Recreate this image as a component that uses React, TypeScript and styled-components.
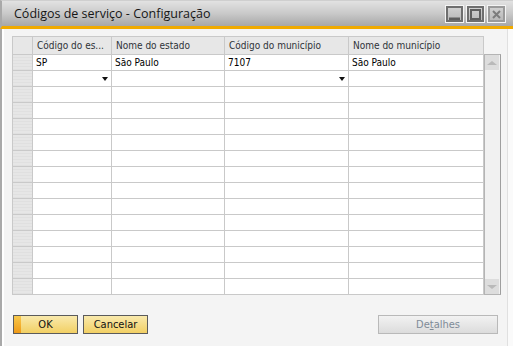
import { Fragment } from 'react';
import styled, { createGlobalStyle } from 'styled-components';

const GlobalStyle = createGlobalStyle`
  html, body {
    margin: 0;
    padding: 0;
    background: #fafafa;
  }
  * {
    box-sizing: border-box;
  }
`;

const cellFont = `'DejaVu Sans Condensed', 'Liberation Sans', sans-serif`;

const Window = styled.div`
  width: 513px;
  height: 346px;
  display: flex;
  flex-direction: column;
  overflow: hidden;
`;

const TitleBar = styled.header`
  height: 25px;
  display: flex;
  align-items: center;
  justify-content: space-between;
  padding: 0 7px 0 12px;
  border-top: 1px solid #cfcfcf;
  border-left: 2px solid #a9a9a9;
  background: linear-gradient(180deg, #e2e2e2 0%, #c9c9c9 50%, #a7a7a7 100%);
  border-bottom: 3px solid #f0aa00;
  box-sizing: content-box;
`;

const Title = styled.h1`
  margin: 0;
  margin-left: -10px;
  font-family: 'Open Sans', 'Liberation Sans', sans-serif;
  font-size: 12.5px;
  font-weight: 400;
  color: #161616;
  padding-left: 10px;
`;

const TitleButtons = styled.div`
  display: flex;
  gap: 2px;
  margin-top: 1px;
`;

const TitleButton = styled.div<{ $light?: boolean }>`
  width: 19px;
  height: 18px;
  border: 1px solid #f4f4f4;
  display: flex;
  align-items: center;
  justify-content: center;
  position: relative;
  &::before {
    content: '';
    position: absolute;
    inset: 0;
    border: 2px solid ${(p) => (p.$light ? '#9a9a9a' : '#6e6e6e')};
    background: linear-gradient(180deg, #d0d0d0, #b9b9b9);
  }
  svg {
    position: relative;
  }
`;

const Body = styled.main`
  flex: 1;
  display: flex;
  flex-direction: column;
  background: #f4f4f4;
  border-left: 2px solid #a9a9a9;
  border-right: 1px solid #e0e0e0;
  margin-right: 5px;
  padding: 7px 5px 0 10px;
  box-shadow: inset 2px 0 0 #ffffff;
`;

const GridArea = styled.div`
  display: flex;
  align-items: flex-start;
`;

const Grid = styled.div`
  display: grid;
  grid-template-columns: 19px 78px 112px 123px 134px;
  grid-template-rows: 17px repeat(15, 15px);
  gap: 1px;
  background: #c9c9c9;
  border: 1px solid #c9c9c9;
  font-family: ${cellFont};
  font-size: 10px;
`;

const HeaderCell = styled.div`
  background: #e7e7e7;
  color: #2e3338;
  padding: 0 4px;
  display: flex;
  align-items: center;
  white-space: nowrap;
  overflow: hidden;
`;

const RowHeader = styled.div`
  background: repeating-linear-gradient(
    180deg,
    #e6e6e6 0px,
    #e6e6e6 2px,
    #e0e0e0 2px,
    #e0e0e0 3px
  );
`;

const Cell = styled.div`
  background: #ffffff;
  color: #000000;
  padding: 0 3px;
  display: flex;
  align-items: center;
  justify-content: space-between;
  white-space: nowrap;
  overflow: hidden;
`;

const DropArrow = styled.span`
  margin-left: auto;
  width: 0;
  height: 0;
  border-left: 3.5px solid transparent;
  border-right: 3.5px solid transparent;
  border-top: 4px solid #111;
  margin-top: 1px;
`;

const Scrollbar = styled.div`
  width: 17px;
  height: 241px;
  margin-top: 18px;
  background: #f1f1f1;
  border: 1px solid #b4b4b4;
  border-right-color: #9e9e9e;
  display: flex;
  flex-direction: column;
  justify-content: space-between;
  padding: 0 1px 0 0;
`;

const ScrollButton = styled.div<{ $down?: boolean }>`
  width: 14px;
  height: 15px;
  background: #dddddd;
  display: flex;
  align-items: center;
  justify-content: center;
  &::after {
    content: '';
    width: 0;
    height: 0;
    border-left: 5px solid transparent;
    border-right: 5px solid transparent;
    ${(p) => (p.$down ? 'border-top' : 'border-bottom')}: 4px solid #b9b9b9;
  }
`;

const Footer = styled.footer`
  display: flex;
  align-items: center;
  justify-content: space-between;
  margin-top: 20px;
  padding: 0 4px 0 1px;
`;

const ButtonGroup = styled.div`
  display: flex;
  gap: 5px;
`;

const ActionButton = styled.button<{ $primary?: boolean }>`
  width: 65px;
  height: 19px;
  border: 1px solid #5b5b5b;
  padding: 0;
  margin: 0;
  font-family: ${cellFont};
  font-size: 11px;
  color: #111;
  background: ${(p) =>
    p.$primary
      ? 'linear-gradient(180deg, #f8c94c 0%, #ef9a18 100%) left / 7px 100% no-repeat, linear-gradient(180deg, #f9e9ac 0%, #f2d064 100%)'
      : 'linear-gradient(180deg, #f9e9ac 0%, #f2d064 100%)'};
`;

const DisabledButton = styled.button`
  width: 120px;
  height: 19px;
  border: 1px solid #b9b9b9;
  padding: 0;
  margin: 0;
  font-family: ${cellFont};
  font-size: 11px;
  color: #7f8b98;
  background: linear-gradient(180deg, #f2f2f2 0%, #dcdcdc 100%);
  u {
    text-decoration-thickness: 1px;
    text-underline-offset: 1px;
  }
`;

const columns = ['Código do es...', 'Nome do estado', 'Código do município', 'Nome do município'];

const rows: { values: string[]; arrows?: boolean }[] = [
  { values: ['SP', 'São Paulo', '7107', 'São Paulo'] },
  { values: ['', '', '', ''], arrows: true },
  ...Array.from({ length: 13 }, () => ({ values: ['', '', '', ''] })),
];

export default function App() {
  return (
    <>
      <GlobalStyle />
      <Window>
        <TitleBar>
          <Title>Códigos de serviço - Configuração</Title>
          <TitleButtons>
            <TitleButton>
              <svg width="11" height="11" viewBox="0 0 11 11">
                <rect x="0" y="8.5" width="11" height="2.5" fill="#5e5e5e" />
              </svg>
            </TitleButton>
            <TitleButton>
              <svg width="11" height="11" viewBox="0 0 11 11">
                <rect x="1" y="1" width="9" height="9" fill="none" stroke="#5e5e5e" strokeWidth="2" />
              </svg>
            </TitleButton>
            <TitleButton $light>
              <svg width="9" height="9" viewBox="0 0 9 9">
                <path d="M1 1 L8 8 M8 1 L1 8" stroke="#7c7c7c" strokeWidth="2" />
              </svg>
            </TitleButton>
          </TitleButtons>
        </TitleBar>
        <Body>
          <GridArea>
            <Grid>
              <HeaderCell />
              {columns.map((c) => (
                <HeaderCell key={c}>{c}</HeaderCell>
              ))}
              {rows.map((row, i) => (
                <Fragment key={i}>
                  <RowHeader />
                  {row.values.map((v, j) => (
                    <Cell key={j}>
                      {v}
                      {row.arrows && (j === 0 || j === 2) && <DropArrow />}
                    </Cell>
                  ))}
                </Fragment>
              ))}
            </Grid>
            <Scrollbar>
              <ScrollButton />
              <ScrollButton $down />
            </Scrollbar>
          </GridArea>
          <Footer>
            <ButtonGroup>
              <ActionButton $primary>OK</ActionButton>
              <ActionButton>Cancelar</ActionButton>
            </ButtonGroup>
            <DisabledButton>
              De<u>t</u>alhes
            </DisabledButton>
          </Footer>
        </Body>
      </Window>
    </>
  );
}
